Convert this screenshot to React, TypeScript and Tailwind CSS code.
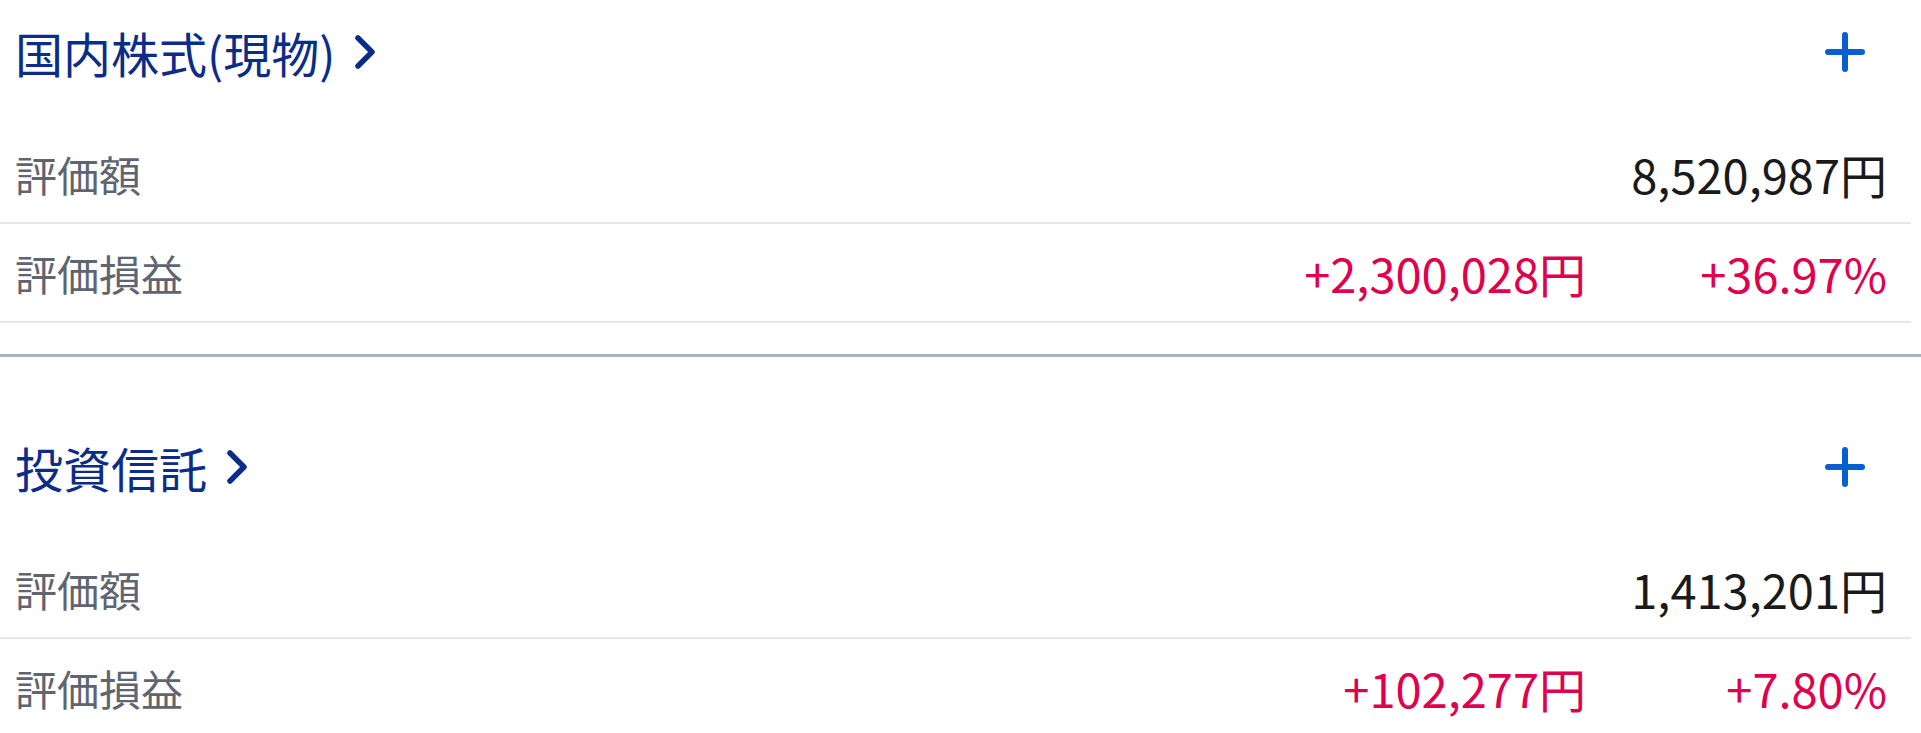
import React from "react";

const FONT = { fontFamily: '"Noto Sans CJK JP", "Noto Sans", sans-serif' };

function Plus() {
  return (
    <svg width="40" height="40" viewBox="0 0 40 40" className="block">
      <path d="M20 3 V37 M3 20 H37" stroke="#0a5fd0" strokeWidth="6" strokeLinecap="round" fill="none" />
    </svg>
  );
}

function Chevron() {
  return (
    <svg width="22" height="36" viewBox="0 0 22 36" className="block">
      <path d="M4 4 L18 18 L4 32" stroke="#0b2c88" strokeWidth="5.5" strokeLinecap="round" strokeLinejoin="round" fill="none" />
    </svg>
  );
}

type Sec = { title: string; value: string; pl: string; pct: string };

function Section({ s, first }: { s: Sec; first?: boolean }) {
  return (
    <div className={first ? "pt-[4px]" : "pt-[62px]"}>
      <div className="flex h-[96px] items-center justify-between pl-[15px] pr-[56px]">
        <div className="flex items-center">
          <span className="text-[48px] leading-none text-[#0b2c88]">{s.title}</span>
          <span className="ml-[19px]">
            <Chevron />
          </span>
        </div>
        <Plus />
      </div>
      <div className="mt-[25px] mr-[10px]">
        <div className="flex h-[99px] items-center border-b-2 border-[#e4e7ef] pl-[15px] pr-[24px]">
          <span className="flex-1 text-[42px] leading-none text-[#5f6570]">評価額</span>
          <span className="text-[47px] leading-none text-[#1a1a1a]">{s.value}</span>
        </div>
        <div className="flex h-[99px] items-center border-b-2 border-[#e4e7ef] pl-[15px] pr-[24px]">
          <span className="flex-1 text-[42px] leading-none text-[#5f6570]">評価損益</span>
          <span className="text-[47px] leading-none text-[#e0004d]">{s.pl}</span>
          <span className="w-[301px] text-right text-[47px] leading-none text-[#e0004d]">{s.pct}</span>
        </div>
      </div>
    </div>
  );
}

export default function App() {
  const a: Sec = { title: "国内株式(現物)", value: "8,520,987円", pl: "+2,300,028円", pct: "+36.97%" };
  const b: Sec = { title: "投資信託", value: "1,413,201円", pl: "+102,277円", pct: "+7.80%" };
  return (
    <div className="h-[733px] w-[1921px] overflow-hidden bg-white" style={FONT}>
      <Section s={a} first />
      <div className="mt-[31px] h-[3px] bg-[#a9b1c5]" />
      <Section s={b} />
    </div>
  );
}
